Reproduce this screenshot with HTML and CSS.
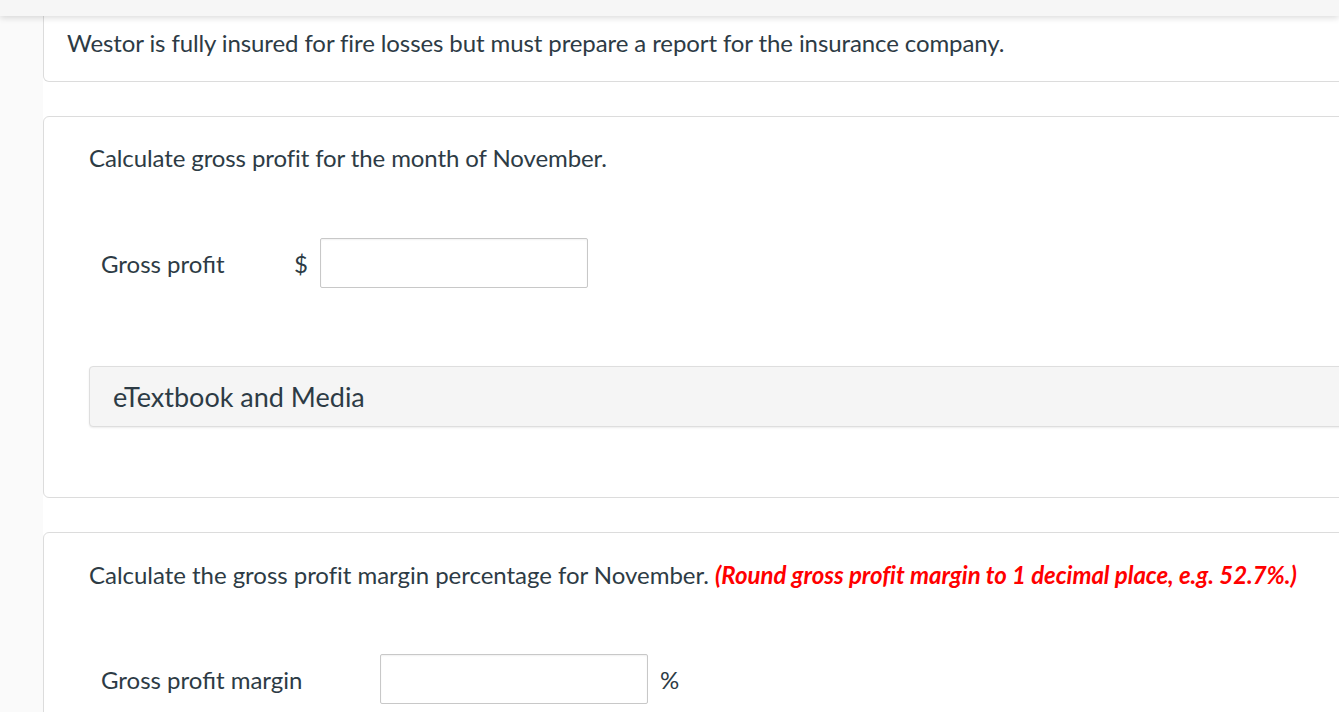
FILE: index.html
```html
<!DOCTYPE html>
<html>
<head>
<meta charset="utf-8">
<link rel="stylesheet" href="styles.css">
</head>
<body>
<div class="topbar"></div>
<div class="layout">
  <div class="gutter"></div>
  <div class="content">
    <div class="card card-intro">
      <p class="text">Westor is fully insured for fire losses but must prepare a report for the insurance company.</p>
    </div>
    <div class="card card-q">
      <p class="text">Calculate gross profit for the month of November.</p>
      <div class="row">
        <span class="label">Gross profit</span>
        <span class="unit-pre">$</span>
        <span class="input"></span>
      </div>
      <div class="media">eTextbook and Media</div>
    </div>
    <div class="card card-q card-last">
      <p class="text text-wide">Calculate the gross profit margin percentage for November. <em class="note">(Round gross profit margin to 1 decimal place, e.g. 52.7%.)</em></p>
      <div class="row row-tight">
        <span class="label label-wide">Gross profit margin</span>
        <span class="input"></span>
        <span class="unit-post">%</span>
      </div>
    </div>
  </div>
</div>
</body>
</html>
```
FILE: styles.css
```css
html, body {
  margin: 0;
  padding: 0;
  height: 100%;
  overflow: hidden;
  background: #ffffff;
  font-family: Lato, "Open Sans", sans-serif;
  color: #2d3b45;
}
.topbar {
  position: fixed;
  top: 0;
  left: 0;
  right: 0;
  height: 16px;
  background: #f6f6f6;
  box-shadow: 0 2px 6px rgba(0, 0, 0, 0.14);
  z-index: 2;
}
.layout {
  display: flex;
  height: 100%;
}
.gutter {
  width: 43px;
  flex: none;
  background: #fafafa;
}
.content {
  flex: none;
  width: 1320px;
  display: flex;
  flex-direction: column;
  gap: 34px;
}
.card {
  flex: none;
  border: 1px solid #dcdcdc;
  border-radius: 6px;
  background: #fff;
}
.card-intro {
  height: 82px;
  box-sizing: border-box;
  border-top: none;
  border-top-left-radius: 0;
  padding: 28px 0 0 23px;
}
.text {
  margin: 0;
  font-size: 24px;
  line-height: 30px;
  letter-spacing: -0.1px;
}
.text-wide {
  letter-spacing: -0.03px;
}
.card-q {
  padding: 26px 0 70px 45px;
}
.card-last {
  padding-top: 27px;
}
.note {
  color: #ff0000;
  font-weight: bold;
}
.row {
  display: flex;
  align-items: center;
  margin-top: 65px;
  padding-left: 12px;
  font-size: 24px;
}
.row-tight {
  margin-top: 64px;
}
.label {
  width: 193px;
}
.label-wide {
  width: 279px;
}
.unit-pre {
  width: 26px;
}
.unit-post {
  margin-left: 12px;
}
.input {
  width: 266px;
  height: 48px;
  border: 1px solid #c8c8c8;
  border-radius: 2px;
  box-shadow: inset 0 1px 2px rgba(0, 0, 0, 0.06);
  background: #fff;
}
.media {
  margin-top: 78px;
  height: 61px;
  box-sizing: border-box;
  background: #f5f5f5;
  border: 1px solid #dedede;
  border-radius: 4px;
  box-shadow: 0 1px 2px rgba(0, 0, 0, 0.08);
  padding-left: 23px;
  display: flex;
  align-items: center;
  font-size: 27px;
}
```
